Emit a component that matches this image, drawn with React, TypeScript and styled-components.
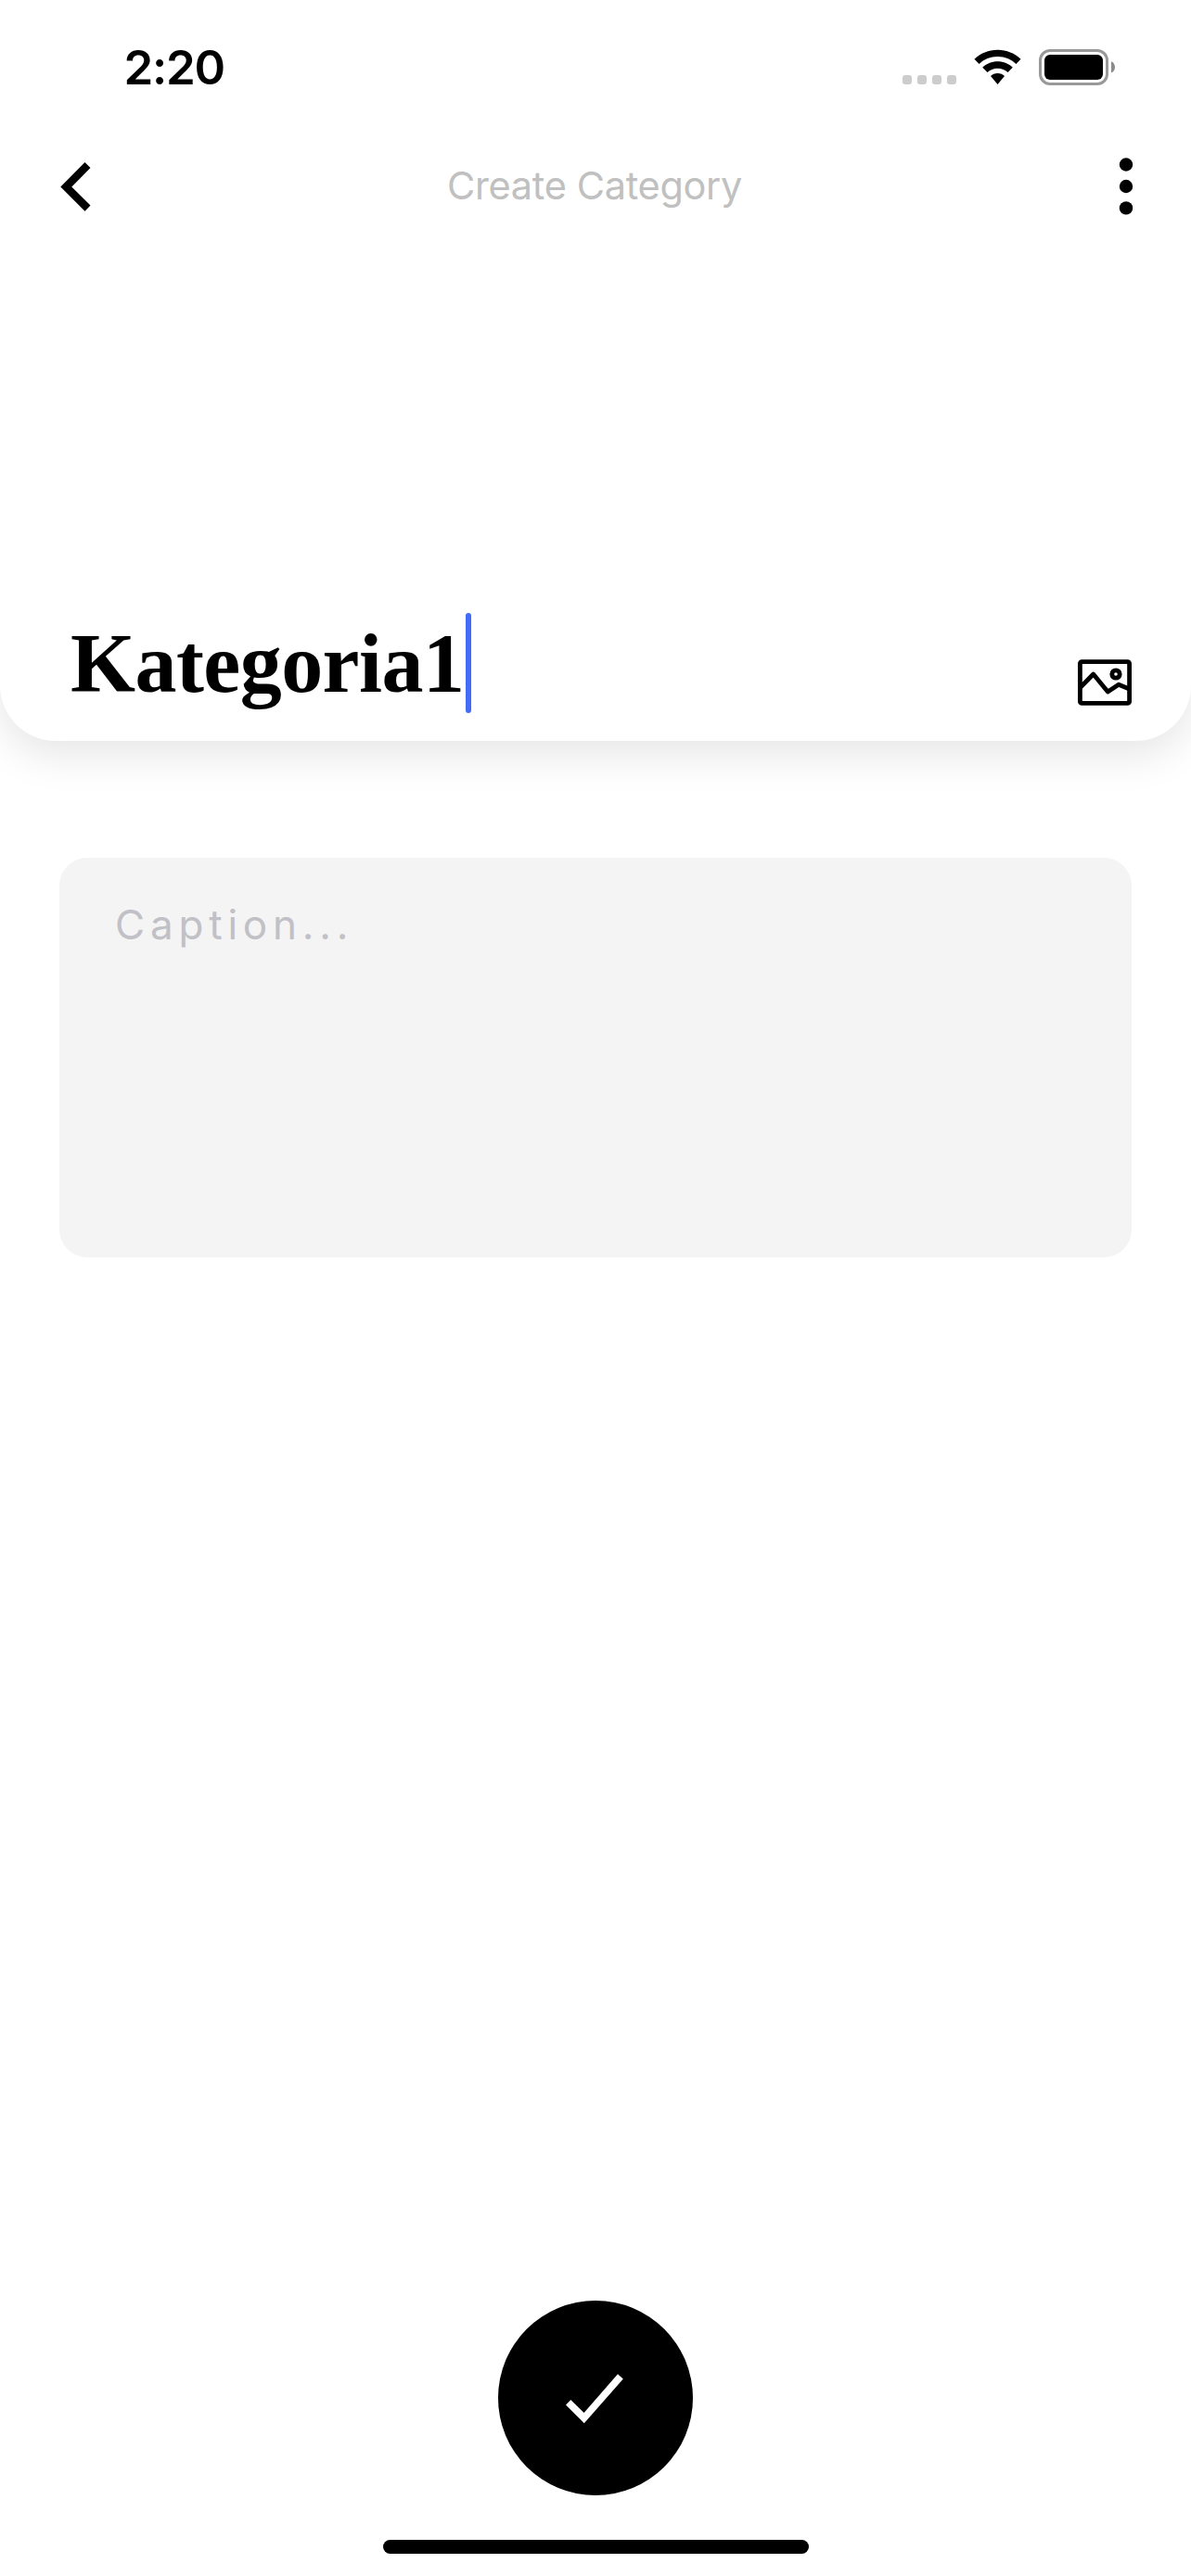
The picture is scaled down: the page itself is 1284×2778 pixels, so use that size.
import React from 'react';
import styled, { createGlobalStyle } from 'styled-components';

const GlobalStyle = createGlobalStyle`
  html, body { margin: 0; padding: 0; background: #fff; }
  *, *::before, *::after { box-sizing: border-box; }
`;

const Screen = styled.div`
  width: 1284px;
  height: 2778px;
  overflow: hidden;
  display: flex;
  flex-direction: column;
  background: #fff;
  font-family: Inter, 'Liberation Sans', sans-serif;
`;

const HeaderCard = styled.header`
  height: 799px;
  flex: none;
  display: flex;
  flex-direction: column;
  border-radius: 0 0 60px 60px;
  background: #fff;
  box-shadow: 0 15px 45px rgba(0, 0, 0, 0.1);
`;

const StatusBar = styled.div`
  height: 141px;
  flex: none;
  display: flex;
  align-items: flex-start;
  justify-content: space-between;
  padding: 42px 82px 0 133.5px;
`;

const Time = styled.span`
  font-size: 51px;
  line-height: 62px;
  font-weight: 600;
  letter-spacing: -1.3px;
  color: #000;
`;

const StatusIcons = styled.div`
  display: flex;
  align-items: flex-start;
  padding-top: 11px;
`;

const Signal = styled.div`
  display: flex;
  gap: 6px;
  margin: 28px 19px 0 0;
`;

const SignalDot = styled.i`
  width: 10px;
  height: 10px;
  border-radius: 3px;
  background: #ccc;
`;

const Icon = styled.svg`
  display: block;
  flex: none;
  overflow: visible;
`;

const BatterySvg = styled(Icon)`
  margin-left: 19px;
`;

const NavBar = styled.nav`
  height: 120px;
  flex: none;
  display: grid;
  grid-template-columns: 1fr auto 1fr;
  align-items: center;
  padding: 0 62px;
`;

const IconButton = styled.button<{ $end?: boolean }>`
  display: flex;
  justify-self: ${(p) => (p.$end ? 'end' : 'start')};
  margin: 0 0 0 ${(p) => (p.$end ? 0 : 3)}px;
  padding: 0;
  border: 0;
  background: none;
`;

const NavTitle = styled.h1`
  margin: 0 2px 2px 0;
  font-size: 41.5px;
  line-height: 50px;
  font-weight: 400;
  letter-spacing: -0.35px;
  color: #c0c0c0;
`;

const NameRow = styled.div`
  flex: 1;
  display: flex;
  align-items: flex-end;
  justify-content: space-between;
  padding: 0 64px 30px 76px;
`;

const NameField = styled.div`
  display: flex;
  align-items: flex-end;
  height: 108px;
`;

const NameText = styled.span`
  padding-bottom: 1px;
  font-family: 'Liberation Serif', 'Times New Roman', serif;
  font-size: 90px;
  line-height: 104px;
  font-weight: 700;
  letter-spacing: -0.55px;
  color: #000;
`;

const Caret = styled.i`
  width: 6px;
  height: 108px;
  margin-left: 2px;
  border-radius: 3px;
  background: #436bf3;
`;

const PictureButton = styled(IconButton)`
  margin-bottom: 8px;
`;

const Body = styled.main`
  flex: 1;
  padding: 126px 64px 0;
`;

const CaptionBox = styled.div`
  height: 431px;
  padding: 45px 60px;
  border-radius: 30px;
  background: #f4f4f4;
  font-size: 44px;
  line-height: 54px;
  letter-spacing: 5.8px;
  color: #c0c0c6;
`;

const Footer = styled.footer`
  flex: none;
  display: flex;
  flex-direction: column;
  align-items: center;
  padding-bottom: 24px;
`;

const ConfirmButton = styled.button`
  width: 210px;
  height: 210px;
  display: flex;
  align-items: center;
  justify-content: center;
  padding: 0 2px 0 0;
  border: 0;
  border-radius: 50%;
  background: #000;
`;

const HomeIndicator = styled.div`
  width: 459px;
  height: 15px;
  margin-top: 48px;
  border-radius: 8px;
  background: #000;
`;

const WifiIcon = () => (
  <Icon width="51" height="38" viewBox="0 0 51 38">
    <path d="M25.5 0.8C35.2 0.8 44 4.6 50.5 10.7L45.4 15.9C40.2 11 33.2 8 25.5 8S10.8 11 5.6 15.9L0.5 10.7C7 4.6 15.8 0.8 25.5 0.8Z" />
    <path d="M25.5 13.3C31.9 13.3 37.6 15.8 41.8 19.8L36.5 25.1C33.7 22.4 29.8 20.8 25.5 20.8S17.3 22.4 14.5 25.1L9.2 19.8C13.4 15.8 19.1 13.3 25.5 13.3Z" />
    <path d="M25.5 26.1C28.4 26.1 31.1 27.3 33 29.1L25.5 37.9L18 29.1C19.9 27.3 22.6 26.1 25.5 26.1Z" />
  </Icon>
);

const BatteryIcon = () => (
  <BatterySvg width="82" height="39" viewBox="0 0 82 39">
    <rect x="1.5" y="1.5" width="72" height="36" rx="10.5" fill="none" stroke="#999" strokeWidth="3" />
    <rect x="6" y="6" width="63" height="27" rx="6" />
    <path d="M78 13.3C80.5 14.3 82 16.6 82 19.4S80.5 24.5 78 25.5Z" fill="#8c8c8c" />
  </BatterySvg>
);

const BackIcon = () => (
  <Icon width="33" height="53" viewBox="0 0 33 53">
    <path d="M26.5 0L32.5 6L12.3 26.4L32.5 46.6L26.5 52.8L0.3 26.4Z" />
  </Icon>
);

const MoreIcon = () => (
  <Icon width="16" height="62" viewBox="0 0 16 62">
    <circle cx="8" cy="7.5" r="7.2" />
    <circle cx="8" cy="31" r="7.2" />
    <circle cx="8" cy="54.4" r="7.2" />
  </Icon>
);

const PictureIcon = () => (
  <Icon width="58" height="50" viewBox="0 0 58 50" fill="none" stroke="#000" strokeWidth="4.8" strokeLinejoin="round">
    <rect x="2.4" y="2.6" width="53.2" height="44.8" rx="2" />
    <path d="M2.5 30.5L16.7 16L32.3 35L44 27.2L55.5 32" />
    <circle cx="41" cy="16" r="4.2" />
  </Icon>
);

const CheckIcon = () => (
  <Icon width="62" height="53" viewBox="0 0 62 53">
    <path d="M5.3 27.9L19.6 42L56 0.3L61.8 5.5L19.8 53.2L0 33.5Z" fill="#fff" />
  </Icon>
);

export default function App() {
  return (
    <>
      <GlobalStyle />
      <Screen>
        <HeaderCard>
          <StatusBar>
            <Time>2:20</Time>
            <StatusIcons>
              <Signal>
                <SignalDot />
                <SignalDot />
                <SignalDot />
                <SignalDot />
              </Signal>
              <WifiIcon />
              <BatteryIcon />
            </StatusIcons>
          </StatusBar>
          <NavBar>
            <IconButton aria-label="Back">
              <BackIcon />
            </IconButton>
            <NavTitle>Create Category</NavTitle>
            <IconButton $end aria-label="More">
              <MoreIcon />
            </IconButton>
          </NavBar>
          <NameRow>
            <NameField>
              <NameText>Kategoria1</NameText>
              <Caret />
            </NameField>
            <PictureButton aria-label="Add picture">
              <PictureIcon />
            </PictureButton>
          </NameRow>
        </HeaderCard>
        <Body>
          <CaptionBox>Caption...</CaptionBox>
        </Body>
        <Footer>
          <ConfirmButton aria-label="Confirm">
            <CheckIcon />
          </ConfirmButton>
          <HomeIndicator />
        </Footer>
      </Screen>
    </>
  );
}
